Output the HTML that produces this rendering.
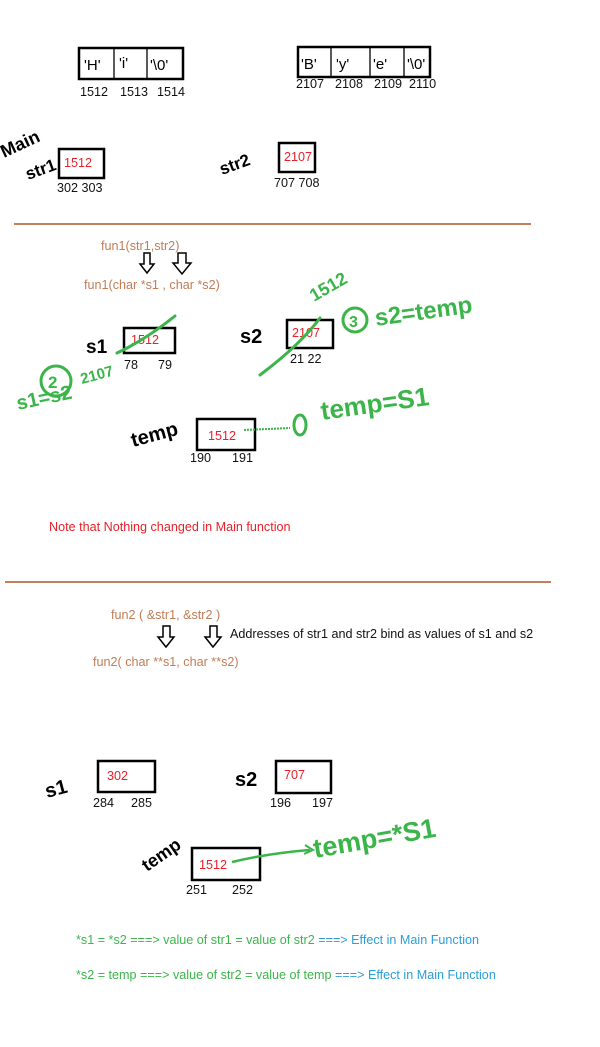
<!DOCTYPE html>
<html><head><meta charset="utf-8"><style>
html,body{margin:0;padding:0;background:#fff;width:600px;height:1047px;overflow:hidden}
svg{display:block}
text{font-family:"Liberation Sans",sans-serif;font-size:12.6px}
.n{fill:#111}
.r{fill:#e8202a}
.b{fill:#c27c55}
.g{fill:#3bb54a}
.bl{fill:#2a9fd8}
.hw{font-family:"Liberation Sans",sans-serif;font-weight:bold;fill:#000;font-size:20px}
.hg{font-family:"Liberation Sans",sans-serif;font-weight:bold;fill:#3bb54a;font-size:22px}
rect.bx{fill:none;stroke:#000;stroke-width:2.5}
.gs{stroke:#3bb54a;stroke-width:3;fill:none;stroke-linecap:round}
</style></head><body>
<svg width="600" height="1047" viewBox="0 0 600 1047">
<rect class="bx" x="79" y="48" width="104" height="31"/>
<line x1="114" y1="48" x2="114" y2="80" stroke="#000" stroke-width="1.3"/>
<line x1="147" y1="48" x2="147" y2="79" stroke="#000" stroke-width="1.3"/>
<text x="84" y="70" style="font-size:15px">'H'</text>
<text x="119" y="68" style="font-size:15px">'i'</text>
<text x="150" y="70" style="font-size:15px">'\0'</text>
<text class="n" x="80" y="96">1512</text><text class="n" x="120" y="96">1513</text><text class="n" x="157" y="96">1514</text>
<rect class="bx" x="298" y="47" width="132" height="30"/>
<line x1="331" y1="47" x2="331" y2="77" stroke="#000" stroke-width="1.3"/>
<line x1="370" y1="47" x2="370" y2="77" stroke="#000" stroke-width="1.3"/>
<line x1="404" y1="47" x2="404" y2="77" stroke="#000" stroke-width="1.3"/>
<text x="301" y="69" style="font-size:15px">'B'</text>
<text x="336" y="69" style="font-size:15px">'y'</text>
<text x="373" y="69" style="font-size:15px">'e'</text>
<text x="407" y="69" style="font-size:15px">'\0'</text>
<text class="n" x="296" y="88">2107</text><text class="n" x="335" y="88">2108</text><text class="n" x="374" y="88">2109</text><text class="n" x="409" y="88">2110</text>

<text class="hw" x="4" y="158" transform="rotate(-25 4 158)" style="font-size:18px">Main</text>
<text class="hw" x="28" y="180" transform="rotate(-20 28 180)" style="font-size:17px">str1</text>
<rect class="bx" x="59" y="149" width="45" height="29"/>
<text class="r" x="64" y="167">1512</text>
<text class="n" x="57" y="192">302 303</text>
<text class="hw" x="222" y="175" transform="rotate(-20 222 175)" style="font-size:17px">str2</text>
<rect class="bx" x="279" y="143" width="36" height="29"/>
<text class="r" x="284" y="161">2107</text>
<text class="n" x="274" y="187">707 708</text>

<line x1="14" y1="224" x2="531" y2="224" stroke="#c0805c" stroke-width="2"/>

<text class="b" x="101" y="250">fun1(str1,str2)</text>
<path d="M144 253h6v11h4l-7 9l-7-9h4z" fill="none" stroke="#000" stroke-width="1.5"/>
<path d="M178 253h8v10h5l-9 11l-9-11h5z" fill="none" stroke="#000" stroke-width="1.5"/>
<text class="b" x="84" y="289">fun1(char *s1 , char *s2)</text>

<text class="hw" x="86" y="353" style="font-size:19px">s1</text>
<rect class="bx" x="124" y="328" width="51" height="25"/>
<text class="r" x="131" y="344">1512</text>
<text class="n" x="124" y="369">78</text><text class="n" x="158" y="369">79</text>
<path class="gs" d="M117 353 Q145 340 175 316"/>
<circle cx="56" cy="381" r="15" fill="none" stroke="#3bb54a" stroke-width="3"/>
<text class="hg" x="48" y="388" style="font-size:17px">2</text>
<text class="hg" x="82" y="384" transform="rotate(-15 82 384)" style="font-size:15px">2107</text>
<text class="hg" x="18" y="410" transform="rotate(-12 18 410)" style="font-size:20px">s1=s2</text>

<text class="hw" x="240" y="343" style="font-size:20px">s2</text>
<rect class="bx" x="287" y="320" width="46" height="28"/>
<text class="r" x="292" y="337">2107</text>
<text class="n" x="290" y="363">21 22</text>
<path class="gs" d="M260 375 Q300 345 320 318"/>
<text class="hg" x="314" y="302" transform="rotate(-30 314 302)" style="font-size:18px">1512</text>
<circle cx="355" cy="320" r="12" fill="none" stroke="#3bb54a" stroke-width="3"/>
<text class="hg" x="349" y="327" style="font-size:16px">3</text>
<text class="hg" x="376" y="326" transform="rotate(-8 376 326)" style="font-size:24px">s2=temp</text>

<text class="hw" x="133" y="447" transform="rotate(-15 133 447)" style="font-size:20px">temp</text>
<rect class="bx" x="197" y="419" width="58" height="31"/>
<text class="r" x="208" y="440">1512</text>
<text class="n" x="190" y="462">190</text><text class="n" x="232" y="462">191</text>
<path d="M244 430 L290 428" stroke="#3bb54a" stroke-width="2" stroke-dasharray="2 1" fill="none"/>
<ellipse cx="300" cy="425" rx="6" ry="10" fill="none" stroke="#3bb54a" stroke-width="3"/>
<text class="hg" x="322" y="420" transform="rotate(-8 322 420)" style="font-size:26px">temp=S1</text>

<text class="r" x="49" y="531">Note that Nothing changed in Main function</text>

<line x1="5" y1="582" x2="551" y2="582" stroke="#c0805c" stroke-width="2"/>

<text class="b" x="111" y="619">fun2 ( &amp;str1, &amp;str2 )</text>
<path d="M163 626h7v11h4l-8 10l-8-10h5z" fill="none" stroke="#000" stroke-width="1.5"/>
<path d="M210 626h7v11h4l-8 10l-8-10h5z" fill="none" stroke="#000" stroke-width="1.5"/>
<text class="n" x="230" y="638">Addresses of str1 and str2 bind as values of s1 and s2</text>
<text class="b" x="93" y="666">fun2( char **s1, char **s2)</text>

<text class="hw" x="47" y="798" transform="rotate(-15 47 798)" style="font-size:20px">s1</text>
<rect class="bx" x="98" y="761" width="57" height="31"/>
<text class="r" x="107" y="780">302</text>
<text class="n" x="93" y="807">284</text><text class="n" x="131" y="807">285</text>
<text class="hw" x="235" y="786" style="font-size:20px">s2</text>
<rect class="bx" x="276" y="761" width="55" height="32"/>
<text class="r" x="284" y="779">707</text>
<text class="n" x="270" y="807">196</text><text class="n" x="312" y="807">197</text>

<text class="hw" x="147" y="872" transform="rotate(-35 147 872)" style="font-size:18px">temp</text>
<rect class="bx" x="192" y="848" width="68" height="32"/>
<text class="r" x="199" y="869">1512</text>
<text class="n" x="186" y="894">251</text><text class="n" x="232" y="894">252</text>
<path d="M232 862 Q270 853 310 850" stroke="#3bb54a" stroke-width="2.5" fill="none"/>
<path d="M305 845 l8 5 -9 4" stroke="#3bb54a" stroke-width="2" fill="none"/>
<text class="hg" x="315" y="858" transform="rotate(-10 315 858)" style="font-size:27px">temp=*S1</text>

<text class="g" x="76" y="944">*s1 = *s2 ===&gt; value of str1 = value of str2 <tspan class="bl">===&gt; Effect in Main Function</tspan></text>
<text class="g" x="76" y="979">*s2 = temp ===&gt; value of str2 = value of temp  <tspan class="bl">===&gt; Effect in Main Function</tspan></text>
</svg>
</body></html>
